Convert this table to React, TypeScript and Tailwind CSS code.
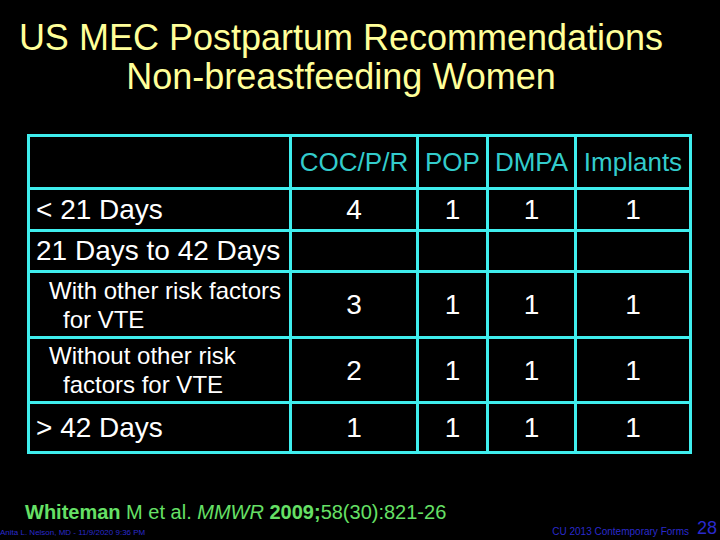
import React from "react";

const cell = "bg-black flex items-center justify-center text-white text-[28px] leading-none";
const headCell = "bg-black flex items-center justify-center text-[#33cccc] text-[26px] leading-none";

function NumRow({ vals }: { vals: string[] }) {
  return (
    <>
      {vals.map((v, i) => (
        <div key={i} className={cell}>
          <span className="pt-[1px]">{v}</span>
        </div>
      ))}
    </>
  );
}

export default function App() {
  return (
    <div className="w-[720px] h-[540px] bg-black overflow-hidden flex flex-col font-['Liberation_Sans',Arial,sans-serif]">
      <div className="pt-[18px] pr-[38px] text-center text-[#ffff99] text-[36px] leading-[39px]">
        <div>US MEC Postpartum Recommendations</div>
        <div>Non-breastfeeding Women</div>
      </div>

      <div className="mt-[38px] ml-[27px] w-fit grid grid-cols-[259px_124px_67px_85px_112px] grid-rows-[50px_39px_38px_63px_62px_47px] gap-[3px] p-[3px] bg-[#3feeee]">
        <div className="bg-black" />
        <div className={headCell}>COC/P/R</div>
        <div className={headCell}>POP</div>
        <div className={headCell}>DMPA</div>
        <div className={headCell}>Implants</div>

        <div className="bg-black flex items-center pl-[6px] text-white text-[28px] leading-none">&lt; 21 Days</div>
        <NumRow vals={["4", "1", "1", "1"]} />

        <div className="bg-black flex items-center pl-[6px] text-white text-[28px] leading-none">21 Days to 42 Days</div>
        <NumRow vals={["", "", "", ""]} />

        <div className="bg-black flex flex-col justify-center pl-[19px] text-white text-[24px] leading-[29px]">
          <div>With other risk factors</div>
          <div className="pl-[14px]">for VTE</div>
        </div>
        <NumRow vals={["3", "1", "1", "1"]} />

        <div className="bg-black flex flex-col justify-center pl-[19px] text-white text-[24px] leading-[29px]">
          <div>Without other risk</div>
          <div className="pl-[14px]">factors for VTE</div>
        </div>
        <NumRow vals={["2", "1", "1", "1"]} />

        <div className="bg-black flex items-center pl-[6px] text-white text-[28px] leading-none">&gt; 42 Days</div>
        <NumRow vals={["1", "1", "1", "1"]} />
      </div>

      <div className="mt-[46px] pl-[25px] h-[24px] leading-[24px] text-[20px] text-[#66e066] whitespace-nowrap">
        <span className="font-bold">Whiteman</span> M et al. <span className="italic">MMWR</span>{" "}
        <span className="font-bold">2009;</span>58(30):821-26
      </div>

      <div className="h-[16px] flex items-end justify-between">
        <div className="ml-0 mb-[3px] text-[8px] leading-none text-[#2a2acc] whitespace-nowrap">
          Anita L. Nelson, MD - 11/9/2020 9:36 PM
        </div>
        <div className="flex items-end mr-[3px] mb-[3px]">
          <span className="text-[10px] leading-none text-[#2a2acc] whitespace-nowrap mr-[8px]">
            CU 2013 Contemporary Forms
          </span>
          <span className="text-[18px] leading-none text-[#2a2acc]">28</span>
        </div>
      </div>
    </div>
  );
}
